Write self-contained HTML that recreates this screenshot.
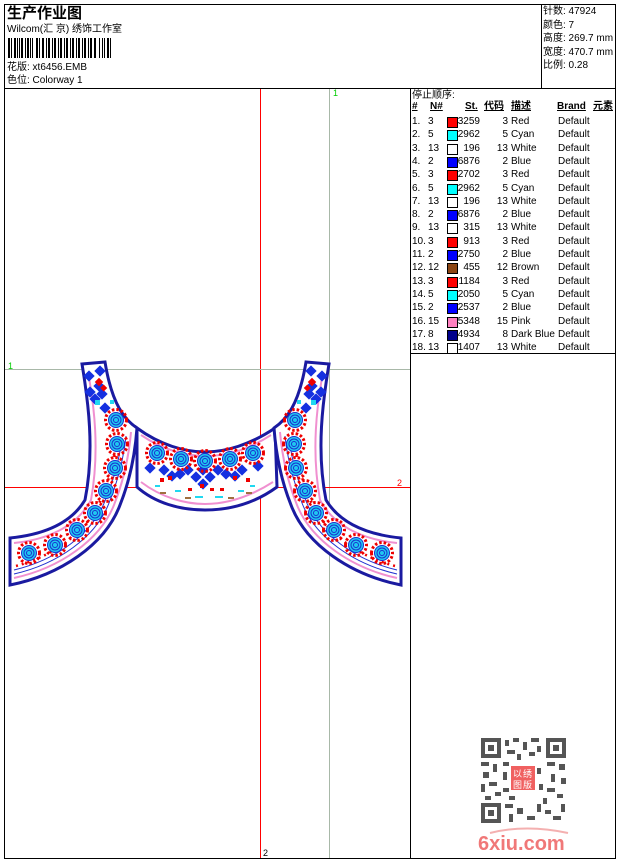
<!DOCTYPE html>
<html><head><meta charset="utf-8"><style>
body{margin:0;width:620px;height:860px;background:#fff;position:relative;overflow:hidden;font-family:"Liberation Sans","Noto Sans CJK SC",sans-serif;font-size:10px;color:#000}
.a{position:absolute;white-space:nowrap;line-height:12px}
.b{position:absolute;background:#000}
.r{position:absolute;height:13px;line-height:13px;font-size:10px;white-space:nowrap}
.sw{position:absolute;width:9px;height:9px;border:1px solid #000;top:1px}
.h{position:absolute;top:101px;line-height:12px;height:12px;font-weight:bold;text-decoration:underline;white-space:nowrap}
</style></head><body>
<!-- frame -->
<div class="b" style="left:4px;top:4px;width:612px;height:1px"></div>
<div class="b" style="left:4px;top:858px;width:612px;height:1px"></div>
<div class="b" style="left:4px;top:4px;width:1px;height:855px"></div>
<div class="b" style="left:615px;top:4px;width:1px;height:855px"></div>
<div class="b" style="left:4px;top:88px;width:612px;height:1px"></div>
<div class="b" style="left:541px;top:4px;width:1px;height:84px"></div>
<div class="b" style="left:410px;top:88px;width:1px;height:771px"></div>
<div class="b" style="left:410px;top:353px;width:206px;height:1px"></div>

<div class="a" style="left:7px;top:5px;font-size:15px;line-height:16px;font-weight:bold;font-family:'Noto Sans CJK SC',sans-serif">生产作业图</div>
<div class="a" style="left:7px;top:24px;font-size:10px">Wilcom(汇 京) 绣饰工作室</div>
<svg class="a" style="left:8px;top:38px" width="104" height="20">
<g fill="#000">
<rect x="0" y="0" width="2" height="20"/><rect x="3" y="0" width="1" height="20"/><rect x="6" y="0" width="2" height="20"/><rect x="9" y="0" width="1" height="20"/><rect x="11" y="0" width="1" height="20"/><rect x="13" y="0" width="2" height="20"/><rect x="17" y="0" width="1" height="20"/><rect x="19" y="0" width="2" height="20"/><rect x="22" y="0" width="1" height="20"/><rect x="24" y="0" width="1" height="20"/><rect x="28" y="0" width="2" height="20"/><rect x="31" y="0" width="1" height="20"/><rect x="34" y="0" width="2" height="20"/><rect x="38" y="0" width="1" height="20"/><rect x="40" y="0" width="2" height="20"/><rect x="44" y="0" width="1" height="20"/><rect x="46" y="0" width="2" height="20"/><rect x="50" y="0" width="1" height="20"/><rect x="52" y="0" width="2" height="20"/><rect x="56" y="0" width="1" height="20"/><rect x="58" y="0" width="2" height="20"/><rect x="62" y="0" width="1" height="20"/><rect x="64" y="0" width="2" height="20"/><rect x="68" y="0" width="1" height="20"/><rect x="70" y="0" width="2" height="20"/><rect x="74" y="0" width="1" height="20"/><rect x="76" y="0" width="2" height="20"/><rect x="80" y="0" width="1" height="20"/><rect x="82" y="0" width="2" height="20"/><rect x="86" y="0" width="2" height="20"/><rect x="91" y="0" width="1" height="20"/><rect x="94" y="0" width="1" height="20"/><rect x="96" y="0" width="1" height="20"/><rect x="99" y="0" width="2" height="20"/><rect x="102" y="0" width="1" height="20"/>
</g></svg>
<div class="a" style="left:7px;top:62px">花版: xt6456.EMB</div>
<div class="a" style="left:7px;top:75px">色位: Colorway 1</div>

<div class="a" style="left:543px;top:5px;line-height:13.6px">针数: 47924<br>颜色: 7<br>高度: 269.7 mm<br>宽度: 470.7 mm<br>比例: 0.28</div>

<!-- guide lines -->
<div class="a" style="left:260px;top:89px;width:1px;height:769px;background:#f00"></div>
<div class="a" style="left:329px;top:89px;width:1px;height:769px;background:#a8b8a8"></div>
<div class="a" style="left:5px;top:369px;width:405px;height:1px;background:#a8b8a8"></div>
<div class="a" style="left:5px;top:487px;width:405px;height:1px;background:#f00"></div>
<div class="a" style="left:333px;top:87px;color:#0c0;font-size:9px">1</div>
<div class="a" style="left:8px;top:360px;color:#0c0;font-size:9px">1</div>
<div class="a" style="left:397px;top:477px;color:#f00;font-size:9px">2</div>
<div class="a" style="left:263px;top:847px;font-size:9px">2</div>

<!-- embroidery -->
<svg class="a" style="left:0;top:0" width="410" height="860">
<defs>
<g id="med"><circle r="10.5" fill="none" stroke="#e00" stroke-width="3" stroke-dasharray="2.5 2"/><circle r="8" fill="#1a30d0"/><circle r="7" fill="#20c8f0"/><circle r="5" fill="none" stroke="#1a30d0" stroke-width="1"/><circle r="2.5" fill="none" stroke="#1a30d0" stroke-width="1"/></g>
<g id="dia"><rect x="-4" y="-4" width="8" height="8" transform="rotate(45)" fill="#1530e0"/></g>
<g id="half">
<path d="M82,364 C88,400 95,450 85,500 C70,525 40,535 10,538 L10,585 C60,575 105,545 120,505 C130,480 135,455 137,428 C125,420 112,405 105,362 Z" fill="#fff" stroke="#1a1aa0" stroke-width="3"/>
<path d="M88,372 C94,405 100,450 91,500 C76,528 45,540 14,543" fill="none" stroke="#f090d0" stroke-width="2"/>
<path d="M14,578 C60,568 100,540 114,505 C124,480 129,455 131,432" fill="none" stroke="#f090d0" stroke-width="2"/>
<path d="M14,574 C58,564 96,537 109,503 C119,478 124,455 126,436" fill="none" stroke="#2030d0" stroke-width="1"/>
<path d="M14,570 C56,560 92,534 105,501 C115,477 120,455 122,438" fill="none" stroke="#2030d0" stroke-width="1"/>
<path d="M16,566 C54,556 88,531 101,499 C111,476 115,455 117,440" fill="none" stroke="#e00" stroke-width="2.5" stroke-dasharray="2 4"/>
<use href="#dia" x="89" y="376"/><use href="#dia" x="99" y="386"/><use href="#dia" x="95" y="399"/><use href="#dia" x="105" y="408"/><use href="#dia" x="90" y="392"/><use href="#dia" x="100" y="371"/><use href="#dia" x="102" y="394"/>
<rect x="96" y="379" width="6" height="6" fill="#e00" transform="rotate(45 99 382)"/>
<rect x="101" y="385" width="5" height="5" fill="#e00" transform="rotate(45 103 388)"/>
<rect x="95" y="400" width="5" height="5" fill="#20d8f0"/><rect x="110" y="400" width="4" height="4" fill="#20d8f0"/>
<use href="#med" x="116" y="420"/><use href="#med" x="117" y="444"/><use href="#med" x="115" y="468"/><use href="#med" x="106" y="491"/><use href="#med" x="95" y="513"/><use href="#med" x="77" y="530"/><use href="#med" x="55" y="545"/><use href="#med" x="29" y="553"/>
</g>
</defs>
<path d="M137,428 C160,445 185,452 205,452 C225,452 250,445 275,428 L277,487 C255,503 230,510 205,510 C180,510 155,503 137,487 Z" fill="#fff" stroke="#1a1aa0" stroke-width="3"/>
<path d="M141,435 C163,450 186,456 205,456 C225,456 248,450 271,435" fill="none" stroke="#f090d0" stroke-width="2"/>
<path d="M141,482 C162,498 186,504 205,504 C225,504 248,498 273,482" fill="none" stroke="#f090d0" stroke-width="2"/>
<use href="#dia" x="164" y="470"/><use href="#dia" x="180" y="474"/><use href="#dia" x="196" y="477"/><use href="#dia" x="210" y="477"/><use href="#dia" x="226" y="474"/><use href="#dia" x="242" y="470"/>
<use href="#dia" x="172" y="476"/><use href="#dia" x="203" y="470"/><use href="#dia" x="235" y="476"/><use href="#dia" x="188" y="470"/><use href="#dia" x="218" y="470"/>
<use href="#dia" x="203" y="484"/><use href="#dia" x="150" y="468"/><use href="#dia" x="258" y="466"/>
<g fill="#e00"><rect x="168" y="476" width="4" height="4"/><rect x="200" y="484" width="4" height="4"/><rect x="233" y="476" width="4" height="4"/><rect x="210" y="488" width="4" height="3"/><rect x="160" y="478" width="4" height="4"/><rect x="246" y="478" width="4" height="4"/><rect x="188" y="488" width="4" height="3"/><rect x="220" y="488" width="4" height="3"/></g>
<g fill="#20d8f0"><rect x="175" y="490" width="6" height="2"/><rect x="195" y="496" width="8" height="2"/><rect x="215" y="496" width="8" height="2"/><rect x="238" y="490" width="6" height="2"/><rect x="155" y="485" width="5" height="2"/><rect x="250" y="485" width="5" height="2"/></g>
<g fill="#a07040"><rect x="160" y="492" width="6" height="2"/><rect x="185" y="497" width="6" height="2"/><rect x="228" y="497" width="6" height="2"/><rect x="246" y="492" width="6" height="2"/></g>
<use href="#med" x="157" y="453"/><use href="#med" x="181" y="459"/><use href="#med" x="205" y="461"/><use href="#med" x="230" y="459"/><use href="#med" x="253" y="453"/>
<use href="#half"/>
<use href="#half" transform="translate(411,0) scale(-1,1)"/>
</svg>

<!-- table -->
<div class="a" style="left:412px;top:90px">停止顺序:</div>
<div class="h" style="left:412px">#</div>
<div class="h" style="left:430px">N#</div>
<div class="h" style="left:465px">St.</div>
<div class="h" style="left:484px">代码</div>
<div class="h" style="left:511px">描述</div>
<div class="h" style="left:557px">Brand</div>
<div class="h" style="left:593px">元素</div>
<div id="rows"></div>
<script>
var d=[[3,"#f00",3259,"Red"],[5,"#0ff",2962,"Cyan"],[13,"#fff",196,"White"],[2,"#00f",6876,"Blue"],[3,"#f00",2702,"Red"],[5,"#0ff",2962,"Cyan"],[13,"#fff",196,"White"],[2,"#00f",6876,"Blue"],[13,"#fff",315,"White"],[3,"#f00",913,"Red"],[2,"#00f",2750,"Blue"],[12,"#8b4513",455,"Brown"],[3,"#f00",1184,"Red"],[5,"#0ff",2050,"Cyan"],[2,"#00f",2537,"Blue"],[15,"#ff80c0",5348,"Pink"],[8,"#00008b",4934,"Dark Blue"],[13,"#fff",1407,"White"]];
var h="";d.forEach(function(r,i){var y=115+i*13.3;
h+='<div class="r" style="left:412px;top:'+y+'px">'+(i+1)+'.</div>'+
'<div class="r" style="left:428px;top:'+y+'px">'+r[0]+'</div>'+
'<div class="sw" style="left:447px;top:'+(y+2)+'px;background:'+r[1]+'"></div>'+
'<div class="r" style="left:455px;width:25px;text-align:right;top:'+y+'px">'+r[2]+'</div>'+
'<div class="r" style="left:488px;width:20px;text-align:right;top:'+y+'px">'+r[0]+'</div>'+
'<div class="r" style="left:511px;top:'+y+'px">'+r[3]+'</div>'+
'<div class="r" style="left:558px;top:'+y+'px">Default</div>';});
document.getElementById("rows").innerHTML=h;
</script>

<!-- QR -->
<svg class="a" style="left:481px;top:738px" width="85" height="85">
<rect width="85" height="85" fill="#fff"/>
<g fill="#555">
<path d="M0 0h20v20H0zM4 4v12h12V4zM7 7h6v6H7z" fill-rule="evenodd"/>
<path d="M65 0h20v20H65zM69 4v12h12V4zM72 7h6v6h-6z" fill-rule="evenodd"/>
<path d="M0 65h20v20H0zM4 69v12h12V69zM7 72h6v6H7z" fill-rule="evenodd"/>
<rect x="24" y="2" width="4" height="6"/><rect x="32" y="0" width="6" height="4"/><rect x="42" y="4" width="4" height="8"/><rect x="50" y="0" width="8" height="4"/><rect x="56" y="8" width="4" height="6"/><rect x="26" y="12" width="8" height="4"/><rect x="36" y="16" width="4" height="6"/><rect x="48" y="14" width="6" height="4"/>
<rect x="0" y="24" width="8" height="4"/><rect x="12" y="26" width="4" height="8"/><rect x="22" y="24" width="6" height="4"/><rect x="2" y="34" width="6" height="6"/><rect x="0" y="46" width="4" height="8"/><rect x="8" y="44" width="8" height="4"/><rect x="14" y="54" width="6" height="4"/><rect x="4" y="58" width="6" height="4"/>
<rect x="66" y="24" width="8" height="4"/><rect x="78" y="26" width="6" height="6"/><rect x="70" y="36" width="4" height="8"/><rect x="80" y="40" width="5" height="6"/><rect x="66" y="50" width="8" height="4"/><rect x="76" y="56" width="6" height="4"/><rect x="62" y="60" width="4" height="6"/>
<rect x="24" y="66" width="8" height="4"/><rect x="28" y="76" width="4" height="8"/><rect x="36" y="70" width="6" height="6"/><rect x="46" y="78" width="8" height="4"/><rect x="56" y="66" width="4" height="8"/><rect x="64" y="72" width="6" height="4"/><rect x="72" y="78" width="8" height="4"/><rect x="80" y="66" width="4" height="8"/>
<rect x="22" y="34" width="4" height="8"/><rect x="22" y="50" width="6" height="4"/><rect x="56" y="30" width="4" height="6"/><rect x="58" y="46" width="4" height="6"/><rect x="28" y="58" width="6" height="4"/>
</g>
<rect x="30" y="28" width="24" height="24" fill="#f06060"/>
<text x="32" y="39" font-size="9" fill="#fff" font-family="Noto Sans CJK SC">以</text><text x="42" y="39" font-size="9" fill="#fff" font-family="Noto Sans CJK SC">绣</text>
<text x="32" y="50" font-size="9" fill="#fff" font-family="Noto Sans CJK SC">图</text><text x="42" y="50" font-size="9" fill="#fff" font-family="Noto Sans CJK SC">版</text>
</svg>
<svg class="a" style="left:476px;top:826px" width="100" height="28">
<path d="M14 7 Q50 -2 92 7" fill="none" stroke="#f4b0b0" stroke-width="2"/>
<text x="2" y="24" font-family="Liberation Sans" font-weight="bold" font-size="20" fill="#f07878">6xiu.com</text>
</svg>
</body></html>
